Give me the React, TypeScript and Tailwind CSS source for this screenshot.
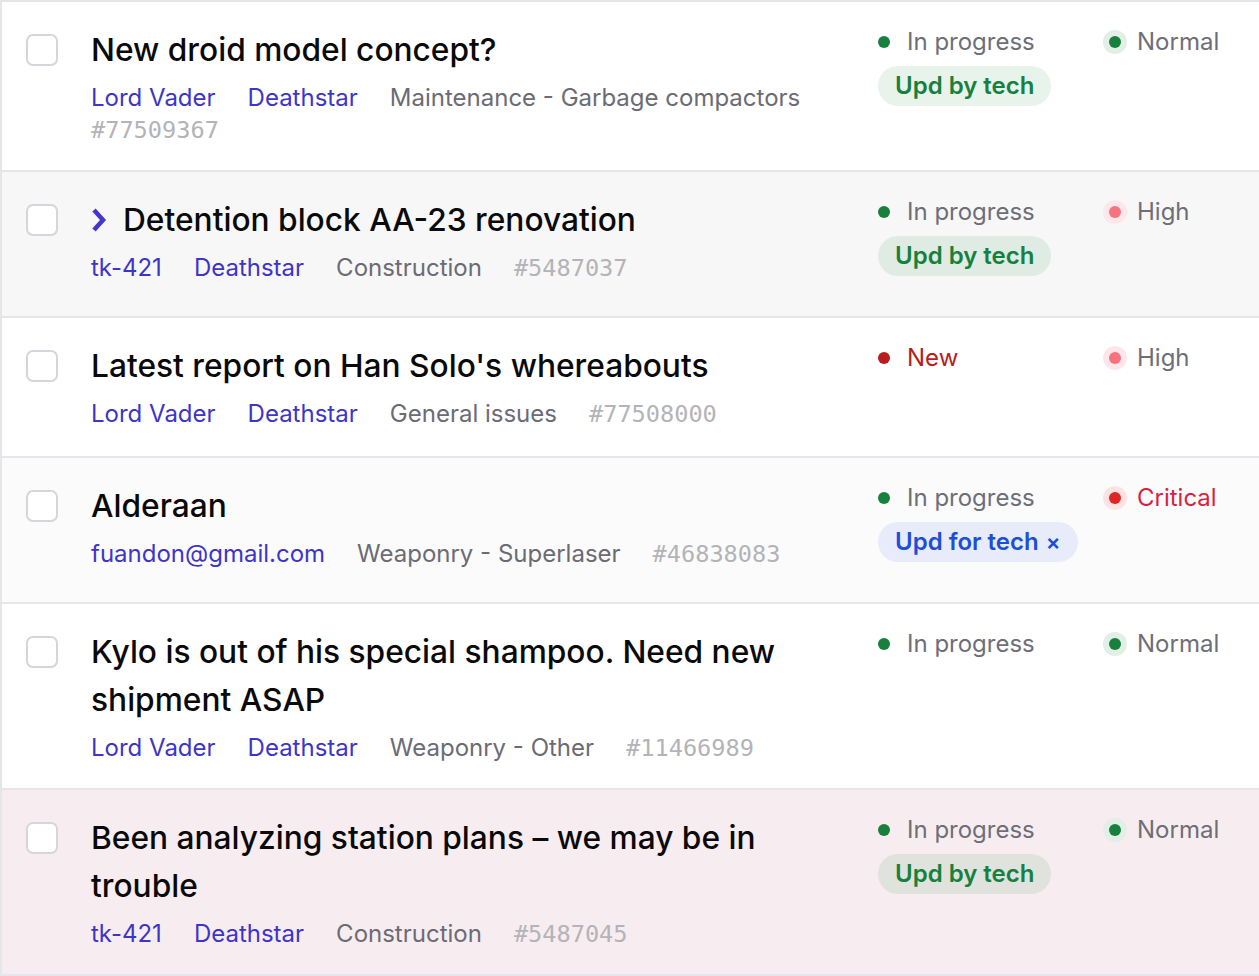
import * as React from "react";

type Status = "progress" | "new";
type Priority = "normal" | "high" | "critical";
type Badge = { label: string; tone: "green" | "blue"; removable?: boolean };

type Ticket = {
  title: string;
  expandable?: boolean;
  meta: { text: string; kind: "link" | "plain" | "hash" }[];
  status: Status;
  badge?: Badge;
  priority: Priority;
  bg: string;
};

const tickets: Ticket[] = [
  {
    title: "New droid model concept?",
    meta: [
      { text: "Lord Vader", kind: "link" },
      { text: "Deathstar", kind: "link" },
      { text: "Maintenance - Garbage compactors", kind: "plain" },
      { text: "#77509367", kind: "hash" },
    ],
    status: "progress",
    badge: { label: "Upd by tech", tone: "green" },
    priority: "normal",
    bg: "bg-white",
  },
  {
    title: "Detention block AA-23 renovation",
    expandable: true,
    meta: [
      { text: "tk-421", kind: "link" },
      { text: "Deathstar", kind: "link" },
      { text: "Construction", kind: "plain" },
      { text: "#5487037", kind: "hash" },
    ],
    status: "progress",
    badge: { label: "Upd by tech", tone: "green" },
    priority: "high",
    bg: "bg-[#f7f7f7]",
  },
  {
    title: "Latest report on Han Solo's whereabouts",
    meta: [
      { text: "Lord Vader", kind: "link" },
      { text: "Deathstar", kind: "link" },
      { text: "General issues", kind: "plain" },
      { text: "#77508000", kind: "hash" },
    ],
    status: "new",
    priority: "high",
    bg: "bg-white",
  },
  {
    title: "Alderaan",
    meta: [
      { text: "fuandon@gmail.com", kind: "link" },
      { text: "Weaponry - Superlaser", kind: "plain" },
      { text: "#46838083", kind: "hash" },
    ],
    status: "progress",
    badge: { label: "Upd for tech", tone: "blue", removable: true },
    priority: "critical",
    bg: "bg-[#fbfbfb]",
  },
  {
    title: "Kylo is out of his special shampoo. Need new shipment ASAP",
    meta: [
      { text: "Lord Vader", kind: "link" },
      { text: "Deathstar", kind: "link" },
      { text: "Weaponry - Other", kind: "plain" },
      { text: "#11466989", kind: "hash" },
    ],
    status: "progress",
    priority: "normal",
    bg: "bg-white",
  },
  {
    title: "Been analyzing station plans \u2013 we may be in trouble",
    meta: [
      { text: "tk-421", kind: "link" },
      { text: "Deathstar", kind: "link" },
      { text: "Construction", kind: "plain" },
      { text: "#5487045", kind: "hash" },
    ],
    status: "progress",
    badge: { label: "Upd by tech", tone: "green" },
    priority: "normal",
    bg: "bg-[#f7edf0]",
  },
];

const metaClass = {
  link: "text-[#3d35c8]",
  plain: "text-[#6b6b75]",
  hash: "text-[#b3b3b8] font-['DejaVu_Sans_Mono',monospace] text-[23.6px]",
};

function StatusCell({ status }: { status: Status }) {
  if (status === "new") {
    return (
      <div className="flex items-center h-8">
        <span className="w-3 h-3 rounded-full bg-[#b91c1c]" />
        <span className="ml-[17px] text-[#b91c1c]">New</span>
      </div>
    );
  }
  return (
    <div className="flex items-center h-8">
      <span className="w-3 h-3 rounded-full bg-[#17803d]" />
      <span className="ml-[17px] text-[#6e6e78]">In progress</span>
    </div>
  );
}

function PriorityCell({ priority }: { priority: Priority }) {
  const styles = {
    normal: { halo: "bg-[#e2eee6]", dot: "bg-[#17803d]", text: "text-[#6e6e78]", label: "Normal" },
    high: { halo: "bg-[#fde7eb]", dot: "bg-[#f8717f]", text: "text-[#6e6e78]", label: "High" },
    critical: { halo: "bg-[#fde3e3]", dot: "bg-[#dc2626]", text: "text-[#d91f44]", label: "Critical" },
  }[priority];
  return (
    <div className="flex items-center h-8">
      <span className={`w-6 h-6 rounded-full flex items-center justify-center ${styles.halo}`}>
        <span className={`w-3 h-3 rounded-full ${styles.dot}`} />
      </span>
      <span className={`ml-[10px] ${styles.text}`}>{styles.label}</span>
    </div>
  );
}

function BadgePill({ badge }: { badge: Badge }) {
  const tone =
    badge.tone === "green"
      ? "bg-[#168a3c]/10 text-[#17803d]"
      : "bg-[#e8ebfa] text-[#1d4ed8]";
  return (
    <span
      className={`mt-2 mb-4 inline-flex items-center h-10 px-[17px] rounded-full font-semibold ${tone}`}
    >
      {badge.label}
      {badge.removable && <span className="ml-[7px] text-[22px]">×</span>}
    </span>
  );
}

function Chevron() {
  return (
    <svg width="16" height="26" viewBox="0 0 16 26" className="mr-[16px] shrink-0">
      <polyline
        points="3,3 12,13 3,23"
        fill="none"
        stroke="#4338ca"
        strokeWidth="4.5"
        strokeLinecap="butt"
        strokeLinejoin="miter"
      />
    </svg>
  );
}

function Row({ t }: { t: Ticket }) {
  return (
    <div className={`flex min-h-[140px] border-b-2 border-[#e5e5ea] pl-6 pr-6 pt-6 pb-6 ${t.bg}`}>
      <div className="mt-2 w-8 h-8 shrink-0 rounded-[7px] border-2 border-[#d6d6da] bg-white" />
      <div className="flex-1 ml-[33px] pr-8">
        <div className="flex items-center text-[31.7px] leading-[48px] font-medium text-[#0a0a0a]">
          {t.expandable && <Chevron />}
          <span>{t.title}</span>
        </div>
        <div className="mt-2 flex flex-wrap gap-x-8 text-[24px] leading-8">
          {t.meta.map((m) => (
            <span key={m.text} className={metaClass[m.kind]}>
              {m.text}
            </span>
          ))}
        </div>
      </div>
      <div className="w-[225px] shrink-0 flex flex-col items-start text-[24px]">
        <StatusCell status={t.status} />
        {t.badge && <BadgePill badge={t.badge} />}
      </div>
      <div className="w-[132px] shrink-0 text-[24px]">
        <PriorityCell priority={t.priority} />
      </div>
    </div>
  );
}

export default function App() {
  return (
    <div className="w-[1259px] h-[976px] overflow-hidden bg-white font-['Inter',sans-serif]">
      <div className="border-l-2 border-t-2 border-[#e5e5ea]">
        {tickets.map((t) => (
          <Row key={t.title} t={t} />
        ))}
      </div>
    </div>
  );
}
